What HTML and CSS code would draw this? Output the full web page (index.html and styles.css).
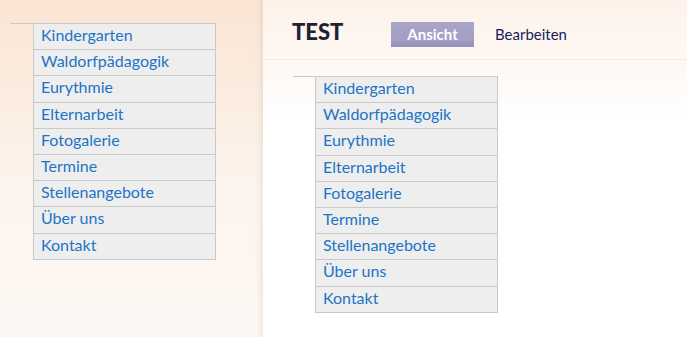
FILE: index.html
```html
<!DOCTYPE html>
<html lang="de">
<head>
<meta charset="utf-8">
<title>TEST</title>
<link rel="stylesheet" href="styles.css">
</head>
<body>
<div class="page">
  <aside class="sidebar">
    <ul class="menu">
      <li><a href="#">Kindergarten</a></li>
      <li><a href="#">Waldorfpädagogik</a></li>
      <li><a href="#">Eurythmie</a></li>
      <li><a href="#">Elternarbeit</a></li>
      <li><a href="#">Fotogalerie</a></li>
      <li><a href="#">Termine</a></li>
      <li><a href="#">Stellenangebote</a></li>
      <li><a href="#">Über uns</a></li>
      <li><a href="#">Kontakt</a></li>
    </ul>
  </aside>
  <main class="main">
    <header class="header">
      <h1 class="title">TEST</h1>
      <nav class="tabs">
        <a class="tab active" href="#">Ansicht</a>
        <a class="tab" href="#">Bearbeiten</a>
      </nav>
    </header>
    <ul class="menu menu-main">
      <li><a href="#">Kindergarten</a></li>
      <li><a href="#">Waldorfpädagogik</a></li>
      <li><a href="#">Eurythmie</a></li>
      <li><a href="#">Elternarbeit</a></li>
      <li><a href="#">Fotogalerie</a></li>
      <li><a href="#">Termine</a></li>
      <li><a href="#">Stellenangebote</a></li>
      <li><a href="#">Über uns</a></li>
      <li><a href="#">Kontakt</a></li>
    </ul>
  </main>
</div>
</body>
</html>
```
FILE: styles.css
```css
html, body {
  margin: 0;
  padding: 0;
  height: 100%;
}
body {
  font-family: Lato, "Liberation Sans", sans-serif;
  background: #ffffff;
}
.page {
  display: flex;
  height: 337px;
  overflow: hidden;
}
.sidebar {
  width: 263px;
  flex: none;
  padding-top: 23px;
  box-sizing: border-box;
  background: linear-gradient(180deg, #fbe5d4 0%, #fbecdf 25%, #fdf4ed 55%, #fdf8f4 100%);
  box-shadow: inset -6px 0 5px -3px rgba(150, 120, 100, 0.12);
}
.menu {
  list-style: none;
  margin: 0 0 0 10px;
  padding: 0;
  width: 206px;
  border-top: 1px solid #c9c9c9;
}
.menu li {
  margin-left: 23px;
  height: 24.2px;
  padding: 1px 0 0 7px;
  background: #eeeeee;
  border: 1px solid #c9c9c9;
  border-top: none;
  display: flex;
  align-items: flex-start;
  box-sizing: content-box;
}
.menu a {
  color: #1c74c6;
  text-decoration: none;
  font-size: 16px;
  line-height: 20px;
}
.main {
  flex: 1;
  background: linear-gradient(180deg, #fdf2ea 0%, #fef8f4 60px, #ffffff 120px);
}
.header {
  height: 60px;
  box-sizing: border-box;
  border-bottom: 1px solid #f4ece6;
  display: flex;
  align-items: flex-start;
  padding: 19px 0 0 29px;
}
.title {
  margin: 0;
  font-size: 22px;
  font-weight: 900;
  line-height: 26px;
  color: #1d2230;
  width: 99px;
}
.tabs {
  display: flex;
  align-items: center;
  margin-top: 3px;
}
.tab {
  font-size: 15px;
  line-height: 25px;
  text-decoration: none;
  color: #1b1b5c;
}
.tab.active {
  width: 83px;
  text-align: center;
  color: #ffffff;
  font-weight: 700;
  background: linear-gradient(180deg, #aaa6ca 0%, #a29ec4 70%, #928eb6 100%);
  margin-right: 21px;
}
.menu-main {
  margin: 16px 0 0 30px;
  width: 205px;
}
.menu-main li {
  margin-left: 22px;
}
```
